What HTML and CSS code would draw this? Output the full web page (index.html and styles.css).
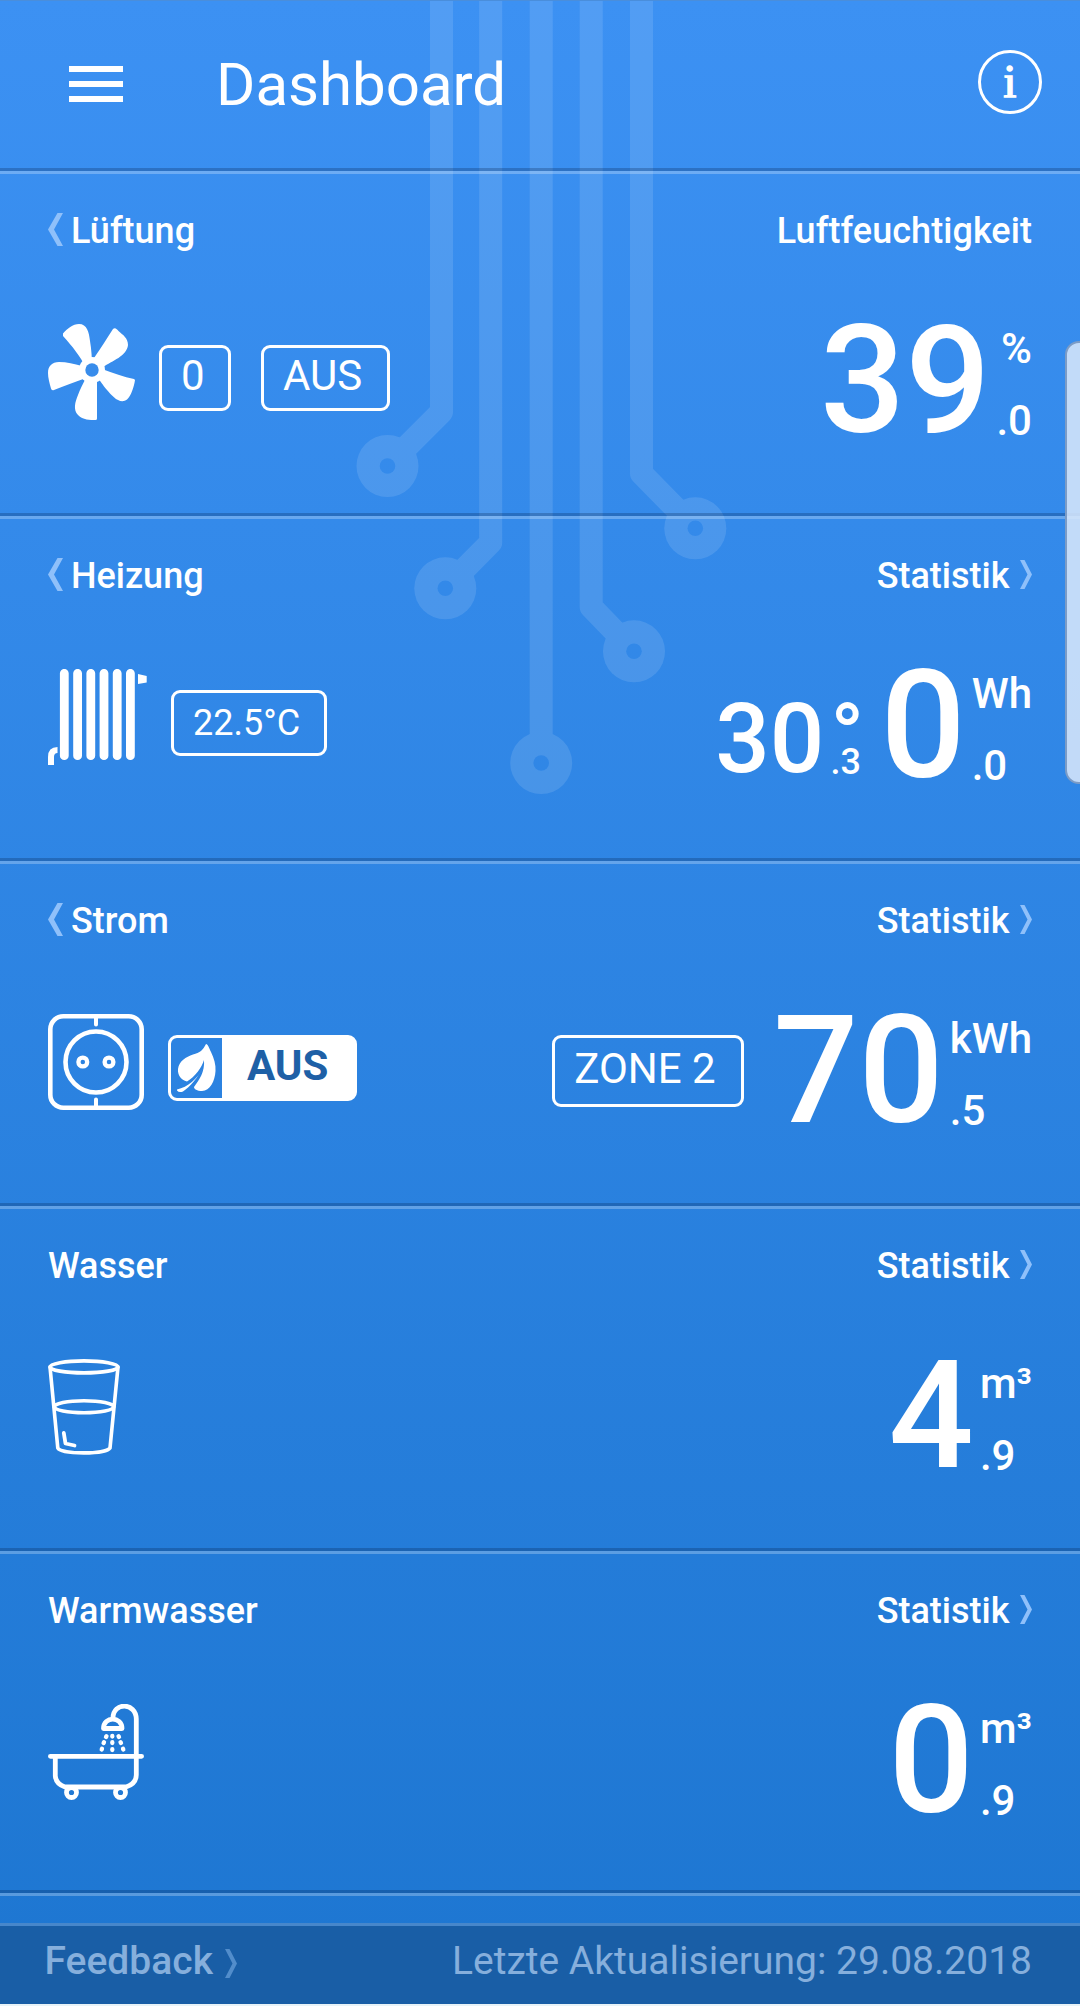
FILE: index.html
```html
<!DOCTYPE html>
<html lang="de">
<head>
<meta charset="utf-8">
<title>Dashboard</title>
<link rel="stylesheet" href="styles.css">
</head>
<body>
<div class="screen">
  <svg class="circuit" width="320" height="800" viewBox="350 0 320 800" aria-hidden="true">
    <mask id="holes" maskUnits="userSpaceOnUse" x="350" y="0" width="400" height="800">
      <rect x="350" y="0" width="400" height="800" fill="#fff"/>
      <g fill="#000"><circle cx="387.5" cy="466" r="7.8"/><circle cx="445.3" cy="588.3" r="7.8"/><circle cx="541.2" cy="763" r="7.8"/><circle cx="634" cy="651.3" r="7.8"/><circle cx="695.3" cy="528.3" r="7.8"/></g>
    </mask>
    <g opacity=".115" mask="url(#holes)">
      <path d="M441.5 0V412L387.5 466M490.7 0V542.5L445.3 588.3M541.2 0V763M591.2 0V607L634 651.3M641.5 0V473.5L695.3 528.3" fill="none" stroke="#fff" stroke-width="23" stroke-linejoin="round"/>
      <g fill="#fff"><circle cx="387.5" cy="466" r="31"/><circle cx="445.3" cy="588.3" r="31"/><circle cx="541.2" cy="763" r="31"/><circle cx="634" cy="651.3" r="31"/><circle cx="695.3" cy="528.3" r="31"/></g>
    </g>
  </svg>

  <header class="header">
    <div class="menu"><span></span><span></span><span></span></div>
    <h1 class="title">Dashboard</h1>
    <div class="info">i</div>
  </header>

  <main class="rows">
    <section class="row">
      <div class="labels">
        <a class="label"><svg class="prev" viewBox="0 0 15 33"><path d="M9.500 0H15L6 16.500 15 33H9.500L0 16.500Z"/></svg>Lüftung</a>
        <a class="label label-wide">Luftfeuchtigkeit</a>
      </div>
      <div class="body">
        <div class="controls">
          <svg class="icon fan" width="87" height="96" viewBox="48 324 87 96">
            <g fill="#fff">
              <path d="M63 333.500C67 329 73 324 79 324C87 324 89 332 90 341C91.500 350 92 358 92 366L86 368C81 357 72 346 63 336Z"/>
              <path d="M113 329C115 327 117 329 118.500 331C123 335 128 338 128 345C127 356 112 361 103 367L94 358C101 348 107 338 113 329Z"/>
              <path d="M135 380C134 387 131 396 127 399.500C120 405 112 396 107 390C102 384 101 382 98 378L102 369C113 373 124 377 134 379Z"/>
              <path d="M97 418.500Q97 420 95.500 420C90 420 83 420 78 415C73 410 75 402 78 395C80 389 83 384 86 378L97 378Z"/>
              <path d="M54 390Q51.500 391 51 388.500C49.500 383 48 378 48 373C48 366 52 362 59 362C67 362 74 364 82 366L86 378C75 382 64 386 54 390Z"/>
              <circle cx="92" cy="370" r="13"/>
            </g>
            <circle class="fan-hub" cx="92" cy="370" r="6.700"/>
          </svg>
          <div class="chip chip-level">0</div>
          <div class="chip chip-mode">AUS</div>
        </div>
        <div class="reading">
          <span class="value">39</span>
          <span class="side side-end"><span>%</span><span>.0</span></span>
        </div>
      </div>
    </section>

    <section class="row">
      <div class="labels">
        <a class="label"><svg class="prev" viewBox="0 0 15 33"><path d="M9.500 0H15L6 16.500 15 33H9.500L0 16.500Z"/></svg>Heizung</a>
        <a class="label">Statistik<svg class="next" viewBox="0 0 12 29"><path d="M0 0H4.500L12 14.500 4.500 29H0L7.500 14.500Z"/></svg></a>
      </div>
      <div class="body">
        <div class="controls">
          <svg class="icon" width="99" height="96" viewBox="0 0 99 96">
            <path d="M16.300 4.300V86.700M29.600 4.300V86.700M42.800 4.300V86.700M56 4.300V86.700M69.200 4.300V86.700M82.400 4.300V86.700" stroke="#fff" stroke-width="8.800" stroke-linecap="round"/>
            <path d="M90 5L98.700 7V13.500L90 15Z" fill="#fff"/>
            <path d="M3 96V88Q3 81 9.500 81" fill="none" stroke="#fff" stroke-width="6"/>
          </svg>
          <div class="chip chip-temp">22.5°C</div>
        </div>
        <div class="reading">
          <span class="value value-small">30</span>
          <span class="degree"><span class="degree-sign">°</span><span class="degree-frac">.3</span></span>
          <span class="value">0</span>
          <span class="side"><span>Wh</span><span>.0</span></span>
        </div>
      </div>
    </section>

    <section class="row">
      <div class="labels">
        <a class="label"><svg class="prev" viewBox="0 0 15 33"><path d="M9.500 0H15L6 16.500 15 33H9.500L0 16.500Z"/></svg>Strom</a>
        <a class="label">Statistik<svg class="next" viewBox="0 0 12 29"><path d="M0 0H4.500L12 14.500 4.500 29H0L7.500 14.500Z"/></svg></a>
      </div>
      <div class="body">
        <div class="controls">
          <svg class="icon" width="96" height="96" viewBox="0 0 96 96" fill="none" stroke="#fff" stroke-width="4.600">
            <rect x="2.300" y="2.300" width="91.400" height="91.400" rx="13"/>
            <circle cx="48" cy="48" r="30.500"/>
            <circle cx="34.800" cy="48" r="4.400" stroke-width="4.300"/>
            <circle cx="61" cy="48" r="4.400" stroke-width="4.300"/>
            <path d="M48 2V10.500M48 94V85.500" stroke-width="4" stroke-linecap="round"/>
          </svg>
          <div class="eco">
            <svg class="leaf" width="51" height="60" viewBox="171 1038 51 60">
              <path d="M206 1044C208 1044 209 1048 211 1052C214 1058 216 1065 215.500 1071C215 1081 210 1091 202 1091C197 1091 194 1089 194 1087C199 1080 205 1072 204 1060C202 1067 195 1077 187 1081.500C181 1080 177.500 1075 178 1069C179 1061 186 1057 193 1054.500C200 1053 203 1050 206 1044Z" fill="#fff"/>
              <path d="M203 1068C198 1077 190 1087 183 1091.500Q179 1093 177 1090.500V1089.500C188 1087 197 1079 203 1068Z" fill="#fff"/>
            </svg>
            <span class="eco-state">AUS</span>
          </div>
        </div>
        <div class="reading">
          <div class="chip chip-zone">ZONE 2</div>
          <span class="value">70</span>
          <span class="side"><span>kWh</span><span>.5</span></span>
        </div>
      </div>
    </section>

    <section class="row">
      <div class="labels">
        <a class="label">Wasser</a>
        <a class="label">Statistik<svg class="next" viewBox="0 0 12 29"><path d="M0 0H4.500L12 14.500 4.500 29H0L7.500 14.500Z"/></svg></a>
      </div>
      <div class="body">
        <div class="controls">
          <svg class="icon" width="72" height="96" viewBox="0 0 72 96" fill="none" stroke="#fff" stroke-width="3.600" stroke-linecap="round" stroke-linejoin="round">
            <ellipse cx="36" cy="7.900" rx="34" ry="6"/>
            <path d="M2 8L9.800 89C13 95.500 58 95.500 62 89L70 8"/>
            <ellipse cx="36" cy="47.800" rx="29.800" ry="6"/>
            <path d="M15.800 74L17.500 84.500 26.500 86.500" stroke-width="3.800"/>
          </svg>
        </div>
        <div class="reading">
          <span class="value">4</span>
          <span class="side"><span>m³</span><span>.9</span></span>
        </div>
      </div>
    </section>

    <section class="row">
      <div class="labels">
        <a class="label">Warmwasser</a>
        <a class="label">Statistik<svg class="next" viewBox="0 0 12 29"><path d="M0 0H4.500L12 14.500 4.500 29H0L7.500 14.500Z"/></svg></a>
      </div>
      <div class="body">
        <div class="controls">
          <svg class="icon" width="96" height="96" viewBox="0 0 96 96" fill="none" stroke="#fff" stroke-width="4.800" stroke-linecap="round" stroke-linejoin="round">
            <path d="M2.400 52.300H93.600M7.300 53V72Q8 80 17 83H78Q88 80 88.300 71V15C88 -2 65 -2 65 14"/>
            <path d="M55.500 24.500C55.500 12 74 12 74 24.500Z"/>
            <circle cx="23.500" cy="88.500" r="5"/>
            <circle cx="72.500" cy="88.500" r="5"/>
            <path d="M58.500 32.200L58 33M64.300 32V32.600M70.500 32.200L71 33M56 38.200L55.600 39M64.300 38.200V39M72.500 38.200L73 39M54 44.700L53.700 45.500M64.300 45.200V46M75 44.700L75.300 45.500" stroke-width="4.300"/>
          </svg>
        </div>
        <div class="reading">
          <span class="value">0</span>
          <span class="side"><span>m³</span><span>.9</span></span>
        </div>
      </div>
    </section>
    <div class="row-end"></div>
  </main>

  <footer class="footer">
    <a class="feedback">Feedback<svg class="next" viewBox="0 0 12 29"><path d="M0 0H4.500L12 14.500 4.500 29H0L7.500 14.500Z"/></svg></a>
    <span class="updated">Letzte Aktualisierung: 29.08.2018</span>
  </footer>
  <div class="edge-handle"></div>
</div>
</body>
</html>
```
FILE: styles.css
```css
* { box-sizing: border-box; }

body {
  margin: 0;
  font-family: Roboto, "Liberation Sans", sans-serif;
  color: #fff;
  background: #e8f3f8;
}

.screen {
  position: relative;
  display: flex;
  flex-direction: column;
  width: 1080px;
  height: 2006px;
  border-bottom: 2px solid #e8f3f8;
  background: linear-gradient(#3c91f3, #1d76d1);
  overflow: hidden;
}

.circuit {
  position: absolute;
  left: 350px;
  top: 0;
  overflow: visible;
}

.header {
  position: relative;
  display: flex;
  align-items: flex-start;
  height: 168px;
  padding: 0 38px 0 69px;
  border-top: 1px solid #4a8edb;
}

.menu {
  display: flex;
  flex-direction: column;
  gap: 9px;
  width: 54px;
  margin-top: 65px;
}

.menu span { height: 6px; background: #fff; }

.title {
  margin: 47px 0 0 93px;
  font-size: 60px;
  font-weight: 400;
  line-height: 74px;
}

.info {
  width: 64px;
  height: 64px;
  margin: 49px 0 0 auto;
  border: 3px solid #fff;
  border-radius: 50%;
  font: 46px/58px "Liberation Serif", serif;
  -webkit-text-stroke: 1.6px #fff;
  text-align: center;
}

.rows { position: relative; }

.row {
  height: 345px;
  padding: 36px 48px 0;
  border-top: 3px solid rgba(0, 20, 60, .24);
  box-shadow: inset 0 3px rgba(255, 255, 255, .26);
}

.row:nth-of-type(5) { height: 342px; }

.row-end {
  height: 33px;
  border-top: 3px solid rgba(0, 20, 60, .24);
  box-shadow: inset 0 3px rgba(255, 255, 255, .26);
}

.labels {
  display: flex;
  justify-content: space-between;
  height: 48px;
}

.label {
  display: flex;
  font-size: 36px;
  font-weight: 500;
  line-height: 48px;
}

.label-wide { letter-spacing: .06px; }

.prev { width: 15px; height: 33px; margin: 6px 8px 0 0; fill: #8fc0fa; }
.next { width: 12px; height: 29px; margin: 8px 0 0 10.5px; fill: #8fc0fa; }

.body {
  display: flex;
  justify-content: space-between;
  align-items: flex-start;
  margin-top: 69px;
}

.controls, .reading { display: flex; align-items: flex-start; }

.icon { display: block; flex: none; }
.fan-hub { fill: #388ceb; }

.chip {
  height: 66px;
  margin-top: 21px;
  padding-left: 19px;
  border: 3px solid #fff;
  border-radius: 9px;
  font-size: 42px;
  line-height: 55px;
  white-space: nowrap;
}

.chip-level { width: 72px; margin-left: 24px; }
.chip-mode { width: 129px; margin-left: 30px; }
.chip-temp { width: 156px; margin-left: 24px; font-size: 36px; line-height: 61px; }
.chip-zone { width: 192px; height: 72px; margin-right: 29px; line-height: 61px; }

.eco {
  display: flex;
  width: 189px;
  height: 66px;
  margin: 21px 0 0 24px;
  border: 3px solid #fff;
  border-radius: 9px;
}

.leaf { display: block; }

.eco-state {
  flex: 1;
  padding-left: 25px;
  background: #fff;
  color: #1e60a6;
  font-size: 42px;
  font-weight: 700;
  line-height: 55px;
}

.value {
  font-size: 150px;
  font-weight: 500;
  line-height: 115px;
}

.value-small { margin-top: 22px; font-size: 96px; line-height: 96px; }

.degree {
  display: flex;
  flex-direction: column;
  width: 50px;
  margin-left: 6px;
  font-weight: 500;
}

.degree-sign { height: 40px; margin-top: 46px; margin-bottom: -17px; font-size: 88px; line-height: 40px; }
.degree-frac { font-size: 36px; line-height: 48px; }

.side {
  display: flex;
  flex-direction: column;
  gap: 23px;
  margin-left: 6px;
  font-size: 42px;
  font-weight: 500;
  line-height: 49px;
}

.side-end { text-align: right; }

.footer {
  display: flex;
  justify-content: space-between;
  height: 81px;
  padding: 0 48px 0 44.5px;
  border-top: 3px solid #4787cb;
  background: #195ea6;
  color: #86afdc;
  font-size: 39px;
  line-height: 70px;
}

.feedback { display: flex; font-weight: 500; }
.feedback .next { margin: 23px 0 0 12.5px; fill: #528dcb; }

.edge-handle {
  position: absolute;
  left: 1065px;
  top: 341px;
  width: 30px;
  height: 443px;
  border: 2px solid #7c9cc6;
  border-radius: 14px;
  background: rgba(214, 230, 250, .88);
}
```
